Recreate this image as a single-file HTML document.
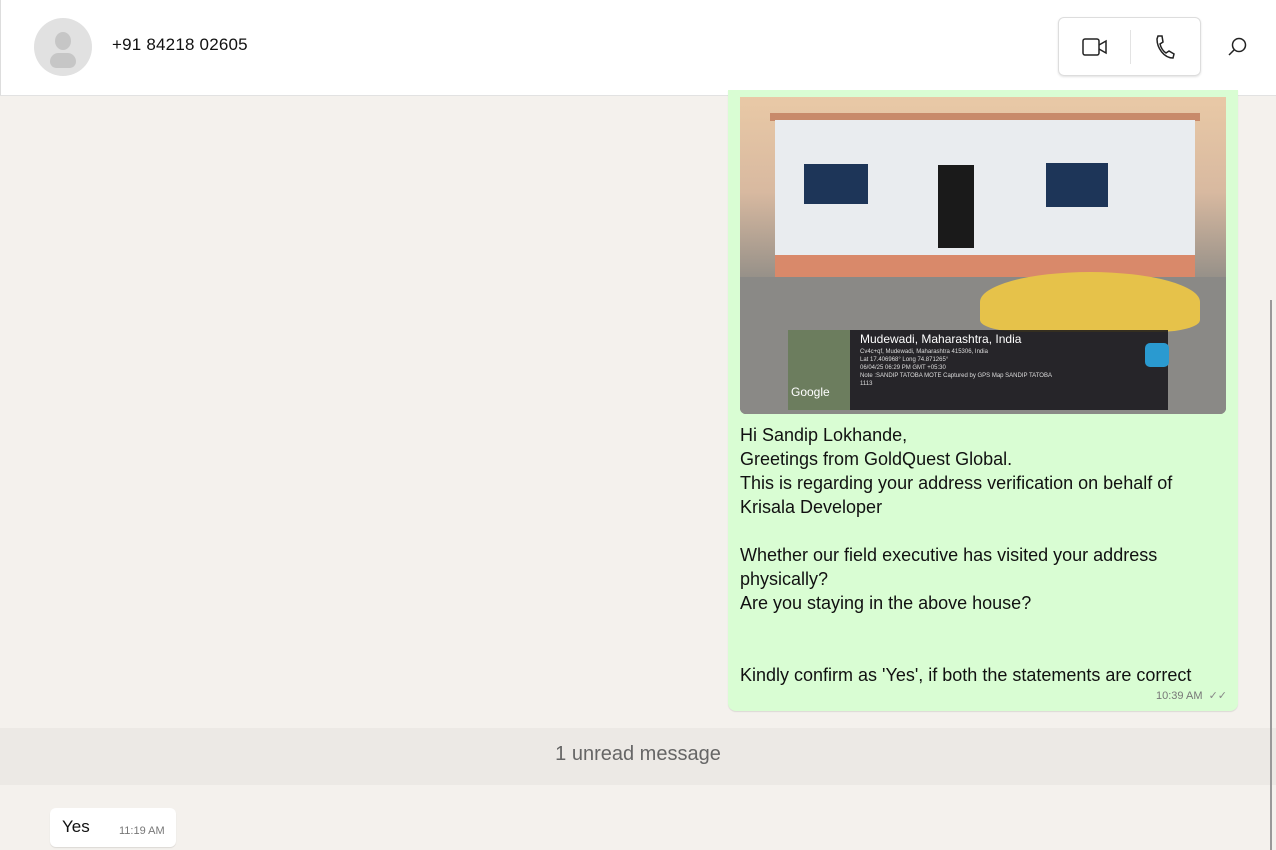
<!DOCTYPE html>
<html><head><meta charset="utf-8"><style>
*{margin:0;padding:0;box-sizing:border-box}
body{width:1276px;height:850px;overflow:hidden;background:#f4f1ed;font-family:"Segoe UI","Liberation Sans",sans-serif;position:relative;color:#111}
.hdr{position:absolute;left:0;top:0;width:1276px;height:96px;background:#fff;border-bottom:1px solid #e2e2e2;border-left:1px solid #ddd}
.av{position:absolute;left:33px;top:18px;width:58px;height:58px;border-radius:50%;background:#e1e1e1;overflow:hidden}
.av:before{content:"";position:absolute;left:21px;top:14px;width:16px;height:18px;border-radius:50%;background:#c6c6c6}
.av:after{content:"";position:absolute;left:16px;top:35px;width:26px;height:15px;border-radius:13px 13px 10px 10px;background:#c6c6c6}
.name{position:absolute;left:111px;top:35px;font-size:17px;color:#111;letter-spacing:0.2px}
.btns{position:absolute;left:1057px;top:17px;width:143px;height:59px;border:1px solid #ddd;border-radius:6px;box-shadow:0 1px 2px rgba(0,0,0,.12)}
.sep{position:absolute;left:71px;top:12px;width:1px;height:34px;background:#e3e3e3}
.bub{position:absolute;left:728px;top:90px;width:510px;height:621px;background:#d9fdd3;border-radius:0 0 8px 8px;box-shadow:0 1px 1px rgba(0,0,0,.1)}
.img{position:absolute;left:740px;top:97px;width:486px;height:317px;border-radius:0 0 6px 6px;overflow:hidden;background:linear-gradient(#e9c9a6,#d8b9a0 30%,#8f8c86 60%,#6d6d6b)}
.txt{position:absolute;left:740px;top:423px;font-size:18px;line-height:24px;color:#111;white-space:nowrap}
.time{position:absolute;left:1156px;top:689px;font-size:11px;color:#777}
.band{position:absolute;left:0;top:728px;width:1276px;height:57px;background:#ece9e5}
.unread{position:absolute;left:0;width:1276px;top:743px;text-align:center;font-size:20px;color:#666}
.yes{position:absolute;left:50px;top:808px;width:126px;height:39px;background:#fff;border-radius:6px;box-shadow:0 1px 1px rgba(0,0,0,.1)}
.scroll{position:absolute;left:1270px;top:300px;width:2px;height:550px;background:#999}
</style></head><body>
<div class="hdr">
<div class="av"></div>
<div class="name">+91 84218 02605</div>
<div class="btns">
<svg style="position:absolute;left:23px;top:18px" width="26" height="22" viewBox="0 0 26 22" fill="none" stroke="#222" stroke-width="1.5"><rect x="1" y="3" width="16" height="16" rx="2"/><path d="M17 9l7-4v12l-7-4"/></svg>
<div class="sep"></div>
<svg style="position:absolute;left:94px;top:16px" width="22" height="26" viewBox="0 0 22 26" fill="none" stroke="#222" stroke-width="1.5"><path d="M5 2l4 0 1 6-3 2c1 4 3 7 6 9l3-2 5 3-1 4c-9 0-16-10-16-19z"/></svg>
</div>
<svg style="position:absolute;left:1226px;top:36px" width="22" height="22" viewBox="0 0 22 22" fill="none" stroke="#222" stroke-width="1.5"><circle cx="12" cy="9" r="6.5"/><path d="M7.5 13.5L2 19"/></svg>
</div>
<div class="bub"></div>
<div class="img">
<div style="position:absolute;left:30px;top:16px;width:430px;height:8px;background:#c88a6a"></div>
<div style="position:absolute;left:35px;top:23px;width:420px;height:135px;background:#e9ecef"></div>
<div style="position:absolute;left:35px;top:158px;width:420px;height:22px;background:#d9896a"></div>
<div style="position:absolute;left:64px;top:67px;width:64px;height:40px;background:#1d3558"></div>
<div style="position:absolute;left:306px;top:66px;width:62px;height:44px;background:#1d3558"></div>
<div style="position:absolute;left:198px;top:68px;width:36px;height:83px;background:#1a1a1a"></div>
<div style="position:absolute;left:0;top:180px;width:486px;height:137px;background:#8a8986"></div>
<div style="position:absolute;left:240px;top:175px;width:220px;height:60px;border-radius:50% 50% 20% 20%;background:#e6c24a"></div>
<div style="position:absolute;left:48px;top:233px;width:62px;height:80px;background:#6c7d5e"></div>
<div style="position:absolute;left:110px;top:233px;width:318px;height:80px;background:rgba(20,20,25,.85)"></div>
<div style="position:absolute;left:120px;top:235px;font-size:12px;color:#fff">Mudewadi, Maharashtra, India</div>
<div style="position:absolute;left:120px;top:251px;font-size:6px;line-height:8px;color:#ddd">Cv4c+qf, Mudewadi, Maharashtra 415306, India<br>Lat 17.406968° Long 74.871265°<br>06/04/25 06:29 PM GMT +05:30<br>Note :SANDIP TATOBA MOTE Captured by GPS Map SANDIP TATOBA<br>1113</div>
<div style="position:absolute;left:51px;top:288px;font-size:12px;color:#fff">Google</div>
<div style="position:absolute;left:405px;top:246px;width:24px;height:24px;border-radius:5px;background:#2a9ad0"></div>
</div>
<div class="txt">Hi Sandip Lokhande,<br>Greetings from GoldQuest Global.<br>This is regarding your address verification on behalf of<br>Krisala Developer<br><br>Whether our field executive has visited your address<br>physically?<br>Are you staying in the above house?<br><br><br>Kindly confirm as 'Yes', if both the statements are correct</div>
<div class="time">10:39 AM &nbsp;<span style="color:#888">✓✓</span></div>
<div class="band"></div>
<div class="unread">1 unread message</div>
<div class="yes"><span style="position:absolute;left:12px;top:9px;font-size:17px">Yes</span><span style="position:absolute;left:69px;top:17px;font-size:11px;color:#777">11:19 AM</span></div>
<div class="scroll"></div>
</body></html>
